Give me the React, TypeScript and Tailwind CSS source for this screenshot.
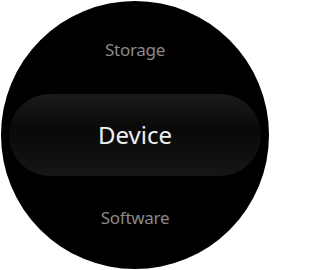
export default function App() {
  return (
    <div className="w-[270px] h-[270px] bg-white flex items-center justify-center">
      <div className="w-[268px] h-[268px] rounded-full bg-black flex flex-col items-center overflow-hidden [font-family:'Noto_Sans',sans-serif]">
        {/* previous item */}
        <div className="h-[93px] pt-[5px] flex items-center justify-center text-[17px] leading-[20px] text-[#8a8a8a] tracking-[-0.3px]">
          Storage
        </div>

        {/* selected item */}
        <div className="h-[82px] w-[252px] shrink-0 rounded-full bg-gradient-to-b from-[#1a1a1a] via-[#090909] via-45% to-[#161616] flex items-center justify-center">
          <span className="text-[24px] leading-[28px] text-[#f0f0f0]">Device</span>
        </div>

        {/* next item */}
        <div className="h-[84px] flex items-center justify-center text-[17px] leading-[20px] text-[#8a8a8a] tracking-[-0.3px]">
          Software
        </div>
      </div>
    </div>
  );
}
